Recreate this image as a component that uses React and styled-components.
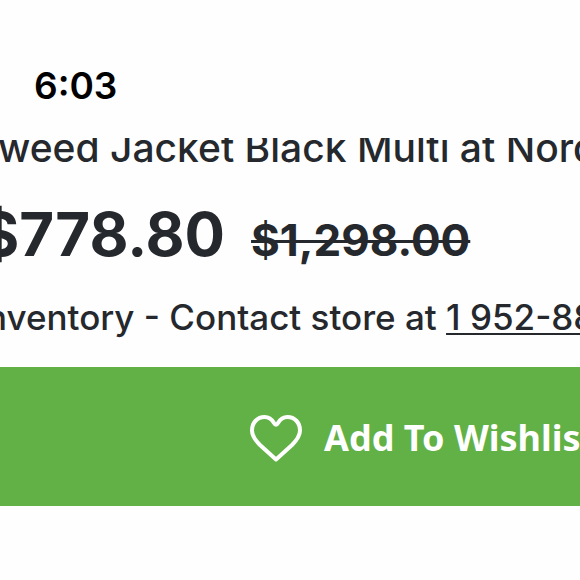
import styled, { createGlobalStyle } from "styled-components"

const GlobalStyle = createGlobalStyle`
  body {
    margin: 0;
    background: #fefefe;
    color: #25282d;
    font-family: Inter, "Liberation Sans", sans-serif;
  }
`

const PageStyle = styled.main`
  display: flex;
  flex-direction: column;
  overflow: hidden;
  white-space: nowrap;
`

const StatusBarStyle = styled.header`
  padding: 64px 34px 30px;
  color: #000;
  font-size: 37px;
  font-weight: 600;
  line-height: 44px;
`

const TitleStyle = styled.h1`
  margin: 0;
  padding-bottom: 8px;
  overflow: hidden;
  font-size: 39px;
  font-weight: 500;
  line-height: 20px;
  text-indent: -2px;
`

const PricesStyle = styled.div`
  display: flex;
  align-items: baseline;
  gap: 26px;
  margin-left: -20px;
  padding-top: 36px;
  font-weight: 700;
  line-height: 64px;
`

const PriceStyle = styled.span`
  font-size: 60px;
`

const OldPriceStyle = styled.s`
  font-size: 44px;
  text-decoration-thickness: 3px;
`

const ContactStyle = styled.p`
  margin: 25px 0 30px -14px;
  font-size: 35px;
  font-weight: 500;
  line-height: 40px;
`

const PhoneStyle = styled.a`
  color: inherit;
  text-decoration-thickness: 2px;
  text-underline-offset: 3px;
`

const WishlistStyle = styled.button`
  display: flex;
  align-items: center;
  gap: 22px;
  width: 100%;
  height: 139px;
  padding: 2px 0 0 249px;
  border: 0;
  background: #62b146;
  color: #fff;
  font-family: "Noto Sans", "Open Sans", sans-serif;
  font-size: 36px;
  font-weight: 700;
  white-space: nowrap;
`

const HeartStyle = styled.svg`
  flex: none;
  width: 53px;
  height: 48px;
  fill: none;
  stroke: currentColor;
  stroke-width: 4;
  stroke-linejoin: round;
`

function Heart() {
  return (
    <HeartStyle viewBox="0 0 53 48" aria-hidden="true">
      <path d="M27 45.500 L11 31 C6 26 3 22 3 16.500 C3 8.500 8.500 3 15.500 3 C20 3 23 5.500 25 9 Q27 12.500 29 9 C31 5.500 34 3 38.500 3 C45.500 3 51 8.500 51 16.500 C51 22 48 26 43 31 Z" />
    </HeartStyle>
  )
}

function App() {
  return (
    <>
      <GlobalStyle />
      <PageStyle>
        <StatusBarStyle>6:03</StatusBarStyle>
        <TitleStyle>weed Jacket Black Multi at Nord</TitleStyle>
        <PricesStyle>
          <PriceStyle>$778.80</PriceStyle>
          <OldPriceStyle>$1,298.00</OldPriceStyle>
        </PricesStyle>
        <ContactStyle>
          nventory - Contact store at <PhoneStyle href="tel:195288">1 952-88</PhoneStyle>
        </ContactStyle>
        <WishlistStyle type="button">
          <Heart />
          Add To Wishlist
        </WishlistStyle>
      </PageStyle>
    </>
  )
}

export default App
